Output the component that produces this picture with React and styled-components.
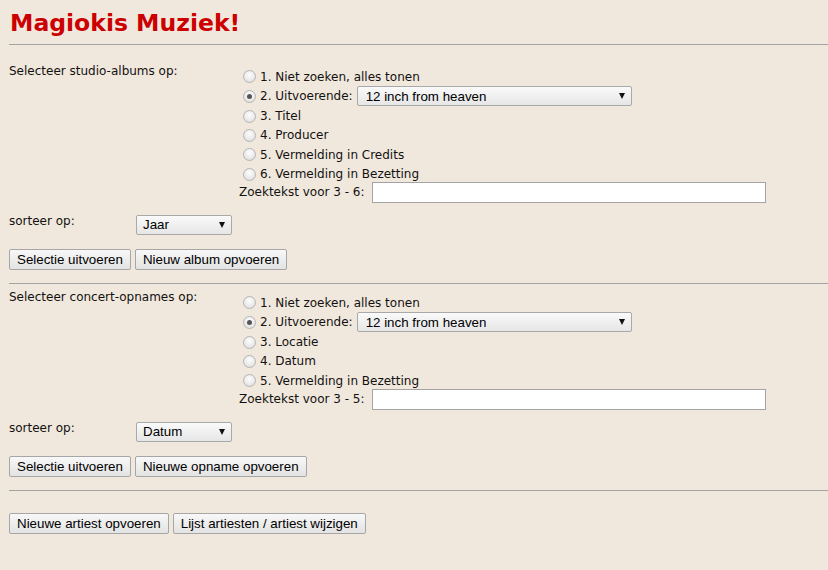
import React from 'react'
import styled, { createGlobalStyle } from 'styled-components'

const GlobalStyle = createGlobalStyle`
  body {
    margin: 0;
    background: #f1e8dd;
    font-family: "DejaVu Sans", Verdana, sans-serif;
    font-size: 12px;
    color: #111;
  }
`

const Page = styled.div`
  padding: 9px 0 30px 9px;
`

const Title = styled.h1`
  margin: 0 0 0 1px;
  font-size: 23.5px;
  line-height: 28px;
  font-weight: bold;
  color: #cc0000;
`

const Rule = styled.hr`
  border: 0;
  border-top: 1px solid #a3a3a3;
  height: 0;
  margin: ${({ $top }) => $top}px 0 ${({ $bottom }) => $bottom}px 0;
`

const Section = styled.div`
  display: grid;
  grid-template-columns: 230px auto;
  align-items: start;
`

const Label = styled.div`
  line-height: 15px;
`

const Options = styled.div`
  display: flex;
  flex-direction: column;
  padding-top: 3px;
`

const OptionRow = styled.label`
  display: flex;
  align-items: center;
  height: ${({ $tall }) => ($tall ? 20 : 19.4)}px;
  white-space: nowrap;
`

const Radio = styled.span`
  box-sizing: border-box;
  width: 13px;
  height: 13px;
  margin: 0 4px 0 4px;
  border-radius: 50%;
  border: 1px solid #b4b4b4;
  background: radial-gradient(circle at 50% 35%, #fdfdfd 0%, #e9e9e9 60%, #d6d6d6 100%);
  display: flex;
  align-items: center;
  justify-content: center;

  &::after {
    content: '';
    width: 5px;
    height: 5px;
    border-radius: 50%;
    background: #555;
    display: ${({ $checked }) => ($checked ? 'block' : 'none')};
  }
`

const SelectBox = styled.span`
  position: relative;
  display: inline-flex;
  align-items: center;
  box-sizing: border-box;
  width: ${({ $width }) => $width}px;
  height: 20px;
  margin-left: ${({ $gap }) => $gap || 0}px;
  padding-left: ${({ $pad }) => $pad}px;
  border: 1px solid #a9a9a9;
  border-radius: 2px;
  background: linear-gradient(#fafafa, #e6e6e6);
  font-family: "Liberation Sans", Arial, sans-serif;
  font-size: 13.33px;
  color: #000;
`

const Arrow = styled.span`
  position: absolute;
  right: 6px;
  top: 6px;
  width: 0;
  height: 0;
  border-left: 3.5px solid transparent;
  border-right: 3.5px solid transparent;
  border-top: 6px solid #111;
`

const SearchRow = styled.div`
  display: flex;
  align-items: center;
  height: 21px;
  margin-top: -2px;
  white-space: nowrap;
`

const TextInput = styled.input`
  box-sizing: border-box;
  width: 394px;
  height: 21px;
  margin-left: 7px;
  border: 1px solid #a4a4a4;
  background: #fff;
  padding: 0 3px;
`

const SortRow = styled.div`
  display: grid;
  grid-template-columns: 127px auto;
  align-items: start;
  margin-top: 11px;
`

const SortLabel = styled.div`
  line-height: 15px;
`

const SortCell = styled.div`
  padding-top: 1px;
`

const ButtonRow = styled.div`
  display: flex;
  gap: 4px;
  margin-top: ${({ $top }) => $top}px;
`

const Button = styled.button`
  box-sizing: border-box;
  height: 21px;
  padding: 0 7px;
  border: 1px solid #a6a6a6;
  border-radius: 2px;
  background: linear-gradient(#f8f8f8, #e3e3e3);
  font-family: "Liberation Sans", Arial, sans-serif;
  font-size: 13.33px;
  color: #000;
`

const Select = ({ value, width, pad = 8, gap }) => (
  <SelectBox $width={width} $pad={pad} $gap={gap}>
    {value}
    <Arrow />
  </SelectBox>
)

const SearchBlock = ({ title, options, range, sortValue, buttons }) => (
  <>
    <Section>
      <Label>{title}</Label>
      <div>
        <Options>
          {options.map((opt, i) => (
            <OptionRow key={opt} $tall={i === 1}>
              <Radio $checked={i === 1} />
              {opt}
              {i === 1 && <Select value="12 inch from heaven" width={275} gap={4} />}
            </OptionRow>
          ))}
        </Options>
        <SearchRow>
          Zoektekst voor {range}:
          <TextInput type="text" />
        </SearchRow>
      </div>
    </Section>
    <SortRow>
      <SortLabel>sorteer op:</SortLabel>
      <SortCell>
        <Select value={sortValue} width={96} pad={6} />
      </SortCell>
    </SortRow>
    <ButtonRow $top={14}>
      {buttons.map((b) => (
        <Button key={b}>{b}</Button>
      ))}
    </ButtonRow>
  </>
)

export default function App() {
  return (
    <Page>
      <GlobalStyle />
      <Title>Magiokis Muziek!</Title>
      <Rule $top={7} $bottom={19} />
      <SearchBlock
        title="Selecteer studio-albums op:"
        options={[
          '1. Niet zoeken, alles tonen',
          '2. Uitvoerende:',
          '3. Titel',
          '4. Producer',
          '5. Vermelding in Credits',
          '6. Vermelding in Bezetting',
        ]}
        range="3 - 6"
        sortValue="Jaar"
        buttons={['Selectie uitvoeren', 'Nieuw album opvoeren']}
      />
      <Rule $top={13} $bottom={6} />
      <SearchBlock
        title="Selecteer concert-opnames op:"
        options={[
          '1. Niet zoeken, alles tonen',
          '2. Uitvoerende:',
          '3. Locatie',
          '4. Datum',
          '5. Vermelding in Bezetting',
        ]}
        range="3 - 5"
        sortValue="Datum"
        buttons={['Selectie uitvoeren', 'Nieuwe opname opvoeren']}
      />
      <Rule $top={13} $bottom={0} />
      <ButtonRow $top={22}>
        <Button>Nieuwe artiest opvoeren</Button>
        <Button>Lijst artiesten / artiest wijzigen</Button>
      </ButtonRow>
    </Page>
  )
}
